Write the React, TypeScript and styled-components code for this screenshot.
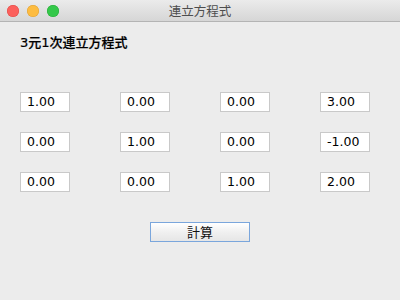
import React from "react";
import styled, { createGlobalStyle } from "styled-components";

const Global = createGlobalStyle`
  html, body { margin: 0; padding: 0; background: #ececec; }
  body { font-family: "DejaVu Sans", "Noto Sans CJK JP", sans-serif; }
`;

const Window = styled.div`
  width: 400px;
  height: 300px;
  display: flex;
  flex-direction: column;
  background: #ececec;
  overflow: hidden;
`;

const TitleBar = styled.div`
  height: 21px;
  display: grid;
  grid-template-columns: 1fr auto 1fr;
  align-items: center;
  background: linear-gradient(#ebebeb, #d6d6d6);
  border-bottom: 1px solid #b4b4b4;
  box-sizing: content-box;
`;

const Lights = styled.div`
  display: flex;
  gap: 8px;
  padding-left: 7px;
`;

const Light = styled.span<{ $color: string; $edge: string }>`
  width: 12px;
  height: 12px;
  border-radius: 50%;
  background: ${(p) => p.$color};
  box-shadow: inset 0 0 0 0.5px ${(p) => p.$edge};
`;

const Title = styled.div`
  font-family: "Noto Sans CJK JP", sans-serif;
  font-size: 12.5px;
  color: #4d4d4d;
  line-height: 21px;
`;

const Content = styled.div`
  display: flex;
  flex-direction: column;
  padding: 12px 20px 0 20px;
`;

const Heading = styled.div`
  font-family: "DejaVu Sans", "Noto Sans CJK JP", sans-serif;
  font-size: 13px;
  font-weight: 500;
  line-height: 18px;
  color: #000;
  height: 18px;
  -webkit-text-stroke: 0.2px #000;
`;

const Grid = styled.div`
  margin-top: 40px;
  display: grid;
  grid-template-columns: repeat(4, 100px);
  row-gap: 20px;
`;

const Field = styled.div`
  width: 50px;
  height: 20px;
  box-sizing: border-box;
  background: #fff;
  border: 1px solid #c9c9c9;
  padding-left: 6px;
  font-family: "DejaVu Sans", sans-serif;
  font-size: 12.5px;
  line-height: 18px;
  color: #000;
`;

const ButtonRow = styled.div`
  margin-top: 30px;
  display: flex;
  justify-content: center;
`;

const Button = styled.div`
  width: 100px;
  height: 20px;
  box-sizing: border-box;
  border: 1px solid #7aa6dc;
  background: linear-gradient(#ffffff, #f0f0f0 50%, #e6e6e6);
  font-family: "Noto Sans CJK JP", sans-serif;
  font-size: 13px;
  line-height: 18px;
  text-align: center;
  color: #111;
`;

const values = [
  ["1.00", "0.00", "0.00", "3.00"],
  ["0.00", "1.00", "0.00", "-1.00"],
  ["0.00", "0.00", "1.00", "2.00"],
];

export default function App() {
  return (
    <>
      <Global />
      <Window>
        <TitleBar>
          <Lights>
            <Light $color="#fc605c" $edge="#de4a46" />
            <Light $color="#fdbc40" $edge="#dea036" />
            <Light $color="#34c84a" $edge="#27aa35" />
          </Lights>
          <Title>連立方程式</Title>
          <div />
        </TitleBar>
        <Content>
          <Heading>3元1次連立方程式</Heading>
          <Grid>
            {values.flat().map((v, i) => (
              <Field key={i}>{v}</Field>
            ))}
          </Grid>
          <ButtonRow>
            <Button>計算</Button>
          </ButtonRow>
        </Content>
      </Window>
    </>
  );
}
